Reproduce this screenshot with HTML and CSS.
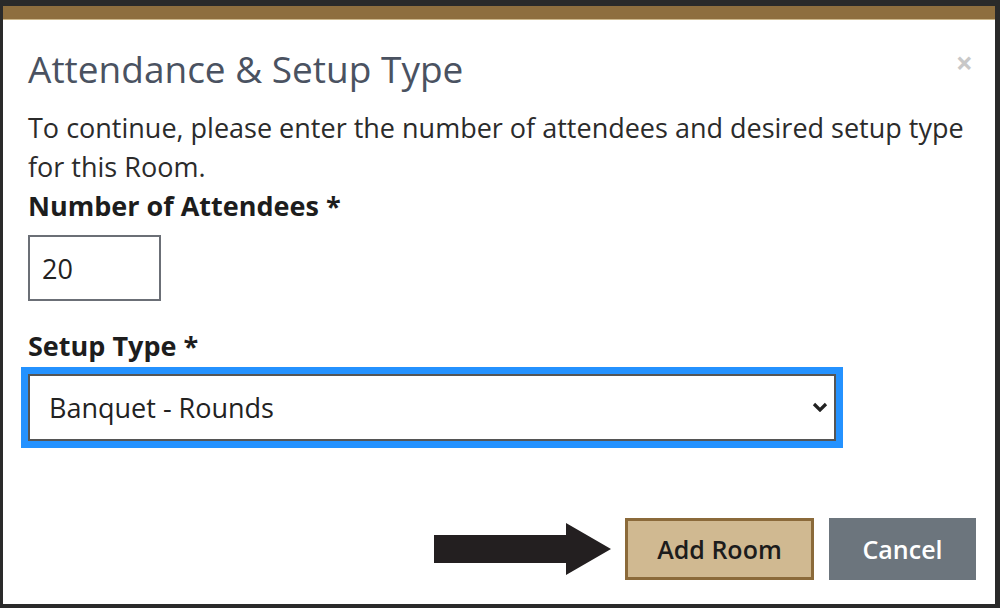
FILE: index.html
```html
<!DOCTYPE html>
<html lang="en">
<head>
    <meta charset="UTF-8">
    <title>Attendance &amp; Setup Type</title>
    <link rel="stylesheet" href="styles.css">
</head>
<body>
    <div class="modal">
        <div class="modal-bar"></div>
        <div class="modal-body">
            <div class="modal-head">
                <h1>Attendance &amp; Setup Type</h1>
                <span class="close">&times;</span>
            </div>
            <p class="intro">To continue, please enter the number of attendees and desired setup type for this Room.</p>
            <label for="attendees">Number of Attendees *</label>
            <input id="attendees" class="count" type="text" value="20">
            <label for="setup" class="setup-label">Setup Type *</label>
            <div class="select-wrap">
                <select id="setup">
                    <option>Banquet - Rounds</option>
                    <option>Theater</option>
                    <option>Classroom</option>
                </select>
                <svg class="chevron" width="16" height="10" viewBox="0 0 16 10">
                    <path d="M2 2 L8 8 L14 2" fill="none" stroke="#222" stroke-width="3.2"/>
                </svg>
            </div>
        </div>
        <div class="modal-foot">
            <!-- pointer to the primary action -->
            <svg class="pointer" width="178" height="52" viewBox="0 0 178 52">
                <polygon points="0,12 132,12 132,0 177,26 132,52 132,40 0,40" fill="#231f20"/>
            </svg>
            <button class="btn-add">Add Room</button>
            <button class="btn-cancel">Cancel</button>
        </div>
    </div>
</body>
</html>
```

FILE: styles.css
```css
html, body {
    margin: 0;
    height: 100%;
}
body {
    background-color: #2a2a2a;
    padding: 6px 5px 4px 3px;
    box-sizing: border-box;
    font-family: "Open Sans", "Liberation Sans", sans-serif;
    color: #212529;
}
.modal {
    background-color: #fff;
    height: 100%;
    display: flex;
    flex-direction: column;
}
.modal-bar {
    height: 13px;
    background-color: #8e6e3e;
    border-bottom: 1px solid #cdb88c;
}
.modal-body {
    flex: 1;
    padding: 27px 20px 0 25px;
}
.modal-head {
    display: flex;
    justify-content: space-between;
    align-items: flex-start;
}
h1 {
    margin: 0;
    font-size: 37px;
    line-height: 43px;
    font-weight: 400;
    color: #4a5261;
}
.close {
    font-size: 30px;
    line-height: 20px;
    font-weight: 700;
    color: #c8c8c8;
    margin: 6px 2px 0 0;
}
.intro {
    margin: 18px 0 0;
    font-size: 27px;
    line-height: 39px;
    color: #2b2b2b;
}
label {
    display: block;
    font-size: 27px;
    line-height: 39px;
    font-weight: 700;
    color: #1d1d1d;
}
.count {
    display: block;
    margin-top: 10px;
    width: 133px;
    height: 66px;
    box-sizing: border-box;
    border: 2px solid #6b6f76;
    padding: 0 12px;
    font-family: inherit;
    font-size: 27px;
    color: #222;
    outline: none;
}
.setup-label {
    margin-top: 25px;
}
.select-wrap {
    position: relative;
    margin-top: 9px;
    margin-right: 139px;
}
select {
    display: block;
    width: 100%;
    height: 67px;
    box-sizing: border-box;
    border: 2px solid #555;
    border-radius: 0;
    padding: 0 19px;
    font-family: inherit;
    font-size: 27px;
    color: #222;
    background-color: #fff;
    appearance: none;
    -webkit-appearance: none;
    outline: none;
    box-shadow: 0 0 0 7px #2492ff;
}
.chevron {
    position: absolute;
    right: 8px;
    top: 28px;
}
.modal-foot {
    display: flex;
    justify-content: flex-end;
    align-items: center;
    padding: 0 19px 24px 0;
}
.pointer {
    margin-right: 13px;
}
.modal-foot button {
    height: 62px;
    box-sizing: border-box;
    font-family: inherit;
    font-size: 25px;
    font-weight: 600;
    border-radius: 0;
    cursor: pointer;
}
.btn-add {
    width: 189px;
    background-color: #d0b991;
    border: 3px solid #8b6a3a;
    color: #1c1c1c;
}
.btn-cancel {
    width: 147px;
    margin-left: 15px;
    background-color: #6c757d;
    border: none;
    color: #fff;
}
```
